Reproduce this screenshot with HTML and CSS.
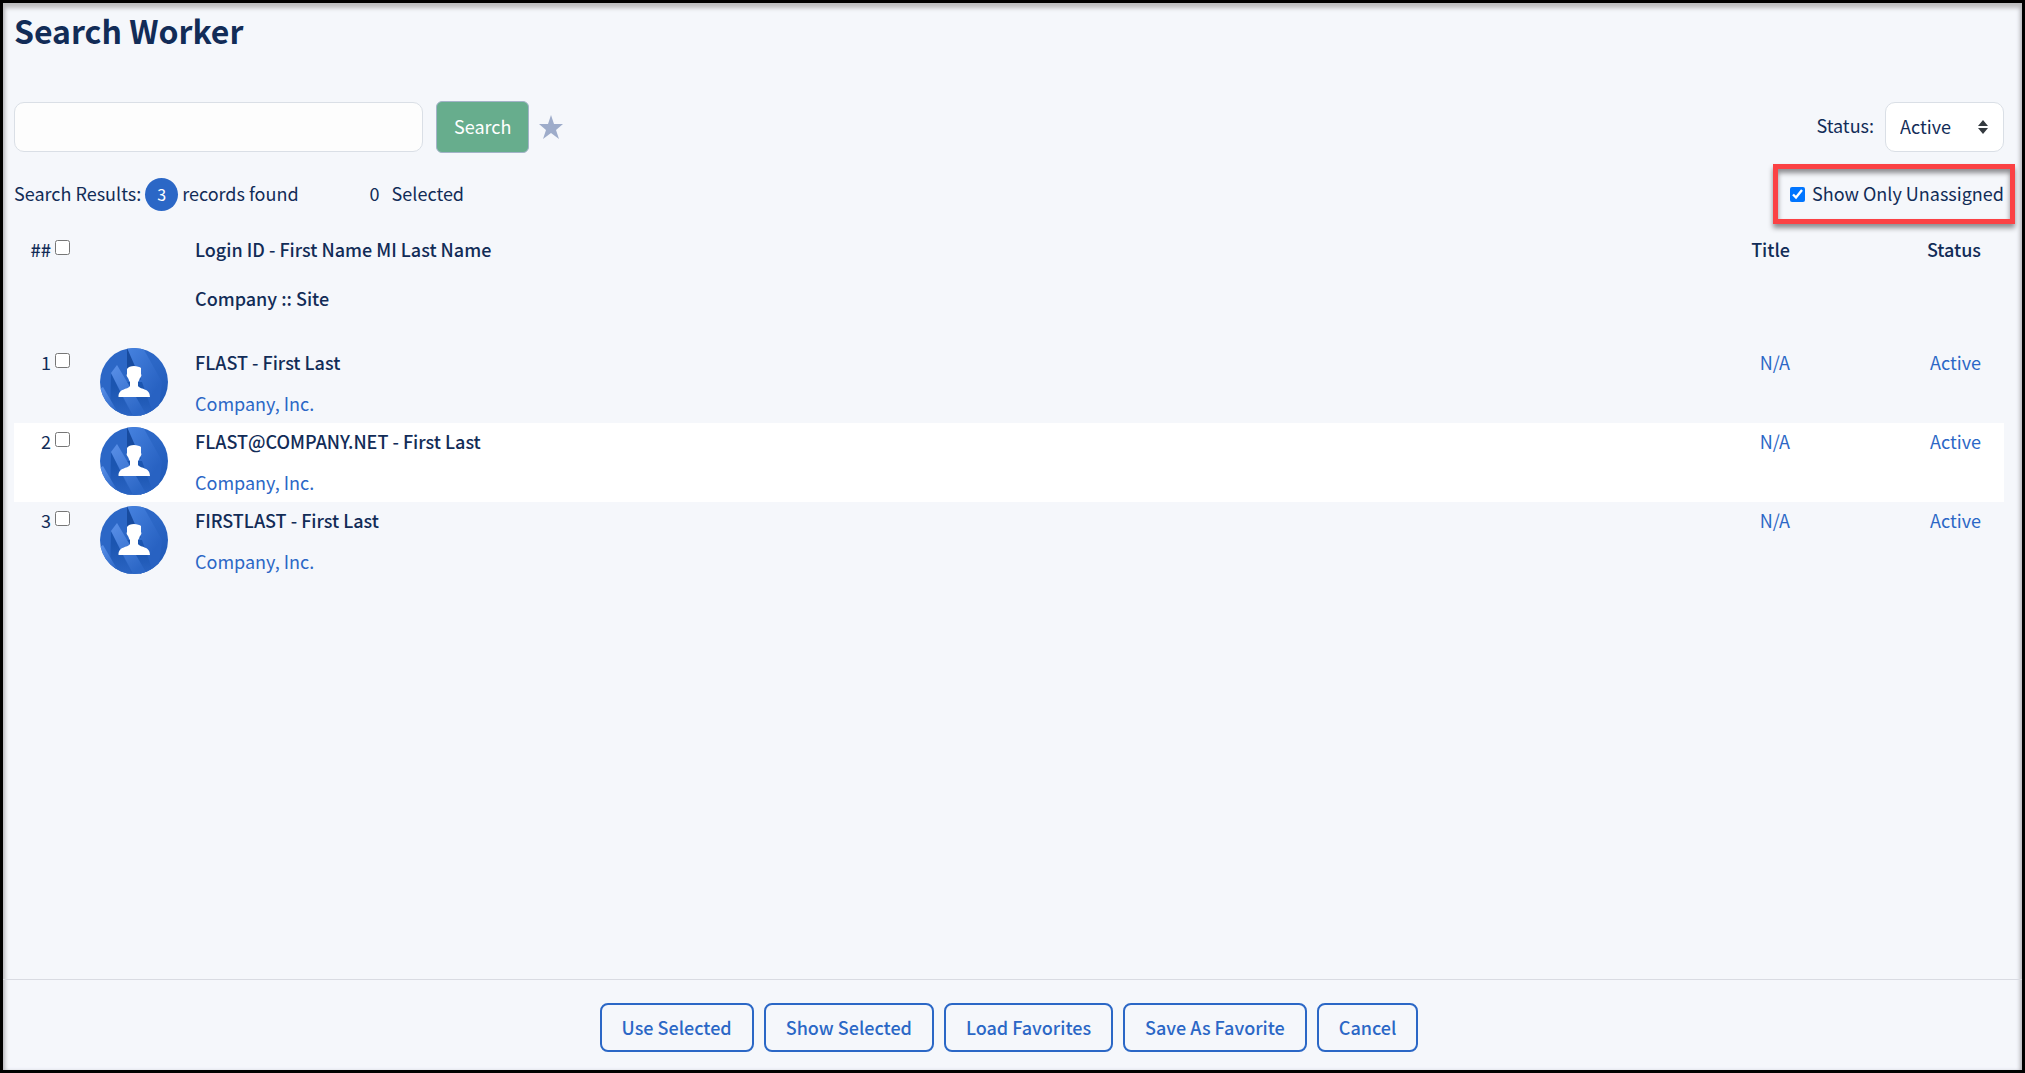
FILE: index.html
```html
<!DOCTYPE html>
<html lang="en">
<head>
<meta charset="utf-8">
<title>Search Worker</title>
<link rel="stylesheet" href="styles.css">
</head>
<body>
<svg class="defs" aria-hidden="true">
  <defs>
    <linearGradient id="base" x1="0" y1="0" x2="1" y2="1">
      <stop offset="0.5" stop-color="#2c67c6"/>
      <stop offset="0.9" stop-color="#205ab8"/>
    </linearGradient>
    <linearGradient id="beam" x1="0" y1="0" x2="0.7" y2="1">
      <stop offset="0" stop-color="#4682df"/>
      <stop offset="0.8" stop-color="#2862c2"/>
    </linearGradient>
    <linearGradient id="shard" x1="0" y1="0" x2="0.6" y2="1">
      <stop offset="0" stop-color="#5a90e8"/>
      <stop offset="1" stop-color="#2c67c6"/>
    </linearGradient>
    <linearGradient id="shade" x1="0" y1="0" x2="0" y2="1">
      <stop offset="0.3" stop-color="#1b55b0"/>
      <stop offset="1" stop-color="#2a64c3"/>
    </linearGradient>
    <clipPath id="disc"><circle cx="34" cy="34" r="34"/></clipPath>
    <symbol id="avatar" viewBox="0 0 68 68">
      <g clip-path="url(#disc)">
        <path fill="url(#base)" d="M0 0h68v68H0z"/>
        <path fill="url(#beam)" d="M27 0h16l19 34-4 34H50z"/>
        <path fill="#174b9f" d="M27 0l14 32-14-8z"/>
        <path fill="url(#shade)" d="M11 25l21 43H10z"/>
        <path fill="url(#shade)" d="M24 34h18l12 34H40z"/>
        <path fill="url(#shard)" d="M11 25l6-8 19 32 11 19H33z"/>
        <path fill="url(#shard)" d="M0 41l3-2 17 29H0z"/>
      </g>
      <path fill="#fff" d="M27 21c1-2 4-3 7-3s6 1 7 2v6c1 1 0 3-1 4-1 2-1 3-2 4v4c3 4 12 2 12 11H18.500c0-9 9-7 11.500-11v-4c-1-1-1-2-2-4-1-1-2-3-1-4z"/>
    </symbol>
  </defs>
</svg>
<div class="page">
  <main class="content">
    <h1 class="title">Search Worker</h1>
    <form class="toolbar">
      <input class="search-box" type="text" aria-label="Search workers">
      <button class="search-button" type="button">Search</button>
      <button class="star" type="button" aria-label="Favorite">
        <svg viewBox="0 0 24 24" width="24" height="24"><path fill="#9eacca" d="M12 0l3 9h9l-7 6 3 9-8-6-8 6 3-9-7-6h9z"/></svg>
      </button>
      <label class="status-label" for="status">Status:</label>
      <div class="select-wrap">
        <select class="status-select" id="status"><option>Active</option><option>Inactive</option></select>
        <svg class="arrows" viewBox="0 0 10 14" width="10" height="14"><path fill="#343a40" d="M5 0l5 6H0zM5 14l5-6H0z"/></svg>
      </div>
    </form>
    <div class="summary">
      <span class="text">Search Results:</span>
      <span class="badge">3</span>
      <span class="text">records found</span>
      <span class="text selected-count">0</span>
      <span class="text">Selected</span>
      <div class="highlight">
        <input class="check" type="checkbox" id="unassigned" checked>
        <label class="text" for="unassigned">Show Only Unassigned</label>
      </div>
    </div>
    <table class="workers">
      <thead>
        <tr>
          <th class="num"><div class="pick"><span>##</span><input class="check" type="checkbox" aria-label="Select all"></div></th>
          <th class="photo"></th>
          <th class="name"><div>Login ID - First Name MI Last Name</div><div class="site">Company :: Site</div></th>
          <th class="job">Title</th>
          <th class="state">Status</th>
        </tr>
      </thead>
      <tbody>
        <tr>
          <td class="num"><div class="pick"><span>1</span><input class="check" type="checkbox" aria-label="Select FLAST"></div></td>
          <td class="photo"><svg class="avatar"><use href="#avatar"/></svg></td>
          <td class="name"><div class="login">FLAST - First Last</div><div class="company">Company, Inc.</div></td>
          <td class="job">N/A</td>
          <td class="state">Active</td>
        </tr>
        <tr>
          <td class="num"><div class="pick"><span>2</span><input class="check" type="checkbox" aria-label="Select FLAST@COMPANY.NET"></div></td>
          <td class="photo"><svg class="avatar"><use href="#avatar"/></svg></td>
          <td class="name"><div class="login">FLAST@COMPANY.NET - First Last</div><div class="company">Company, Inc.</div></td>
          <td class="job">N/A</td>
          <td class="state">Active</td>
        </tr>
        <tr>
          <td class="num"><div class="pick"><span>3</span><input class="check" type="checkbox" aria-label="Select FIRSTLAST"></div></td>
          <td class="photo"><svg class="avatar"><use href="#avatar"/></svg></td>
          <td class="name"><div class="login">FIRSTLAST - First Last</div><div class="company">Company, Inc.</div></td>
          <td class="job">N/A</td>
          <td class="state">Active</td>
        </tr>
      </tbody>
    </table>
  </main>
  <footer class="actions">
    <button class="action" type="button">Use Selected</button>
    <button class="action" type="button">Show Selected</button>
    <button class="action" type="button">Load Favorites</button>
    <button class="action" type="button">Save As Favorite</button>
    <button class="action" type="button">Cancel</button>
  </footer>
</div>
</body>
</html>
```
FILE: styles.css
```css
* {
  box-sizing: border-box;
}

body {
  margin: 0;
  color: #122c57;
  font: 18px/24px "Noto Sans CJK SC", "Noto Sans", sans-serif;
}

button,
input,
select {
  margin: 0;
  color: inherit;
  font: inherit;
}

.defs {
  position: absolute;
  width: 0;
  height: 0;
}

.page {
  display: flex;
  flex-direction: column;
  min-height: 100vh;
  border: 3px solid #000;
  background: #f5f7fb;
  box-shadow: inset 0 5px 4px #bcbcbe, inset 4px 0 5px -3px #a4a4ac, inset -4px 0 5px -3px #a4a4ac;
}

.content {
  flex: 1;
  padding: 7px 18px 0 11px;
}

.title {
  margin: 0;
  font-size: 32px;
  line-height: 40px;
  font-weight: 700;
}

.toolbar {
  display: flex;
  align-items: center;
  height: 52px;
  margin-top: 51px;
}

.search-box {
  width: 409px;
  height: 50px;
  padding: 0 14px;
  border: 1px solid #dadfe6;
  border-radius: 10px;
  background: #fdfdfd;
}

.search-button {
  height: 52px;
  margin-left: 13px;
  padding: 0 17px 2px;
  border: 1px solid #a3b3c8;
  border-radius: 6px;
  background: #67ad8d;
  color: #fff;
}

.star {
  display: flex;
  margin-left: 10px;
  padding: 0;
  border: 0;
  background: none;
}

.status-label {
  margin-left: auto;
  padding-bottom: 4px;
}

.select-wrap {
  display: grid;
  align-items: center;
  width: 119px;
  margin-left: 11px;
}

.status-select {
  grid-area: 1 / 1;
  height: 50px;
  padding: 0 14px 2px;
  border: 1px solid #dadfe6;
  border-radius: 10px;
  background: #fff;
  appearance: none;
}

.arrows {
  grid-area: 1 / 1;
  justify-self: end;
  margin-right: 16px;
  pointer-events: none;
}

.summary {
  display: flex;
  align-items: center;
  height: 60px;
  margin-top: 11px;
  margin-right: -11px;
}

.text {
  padding-bottom: 2px;
}

.badge {
  width: 33px;
  height: 33px;
  margin: 0 4px;
  border-radius: 50%;
  background: #2b67c6;
  color: #fff;
  font-size: 16px;
  line-height: 33px;
  text-align: center;
}

.selected-count {
  margin: 0 12px 0 71px;
}

.highlight {
  display: flex;
  align-items: center;
  gap: 7px;
  height: 60px;
  margin-left: auto;
  padding: 0 6px 0 12px;
  border: 5px solid #fb4144;
  box-shadow: 0 4px 5px #8c8c90, inset 0 4px 5px #8c8c90;
}

.check {
  flex: none;
  width: 15px;
  height: 15px;
}

.workers {
  width: 100%;
  border-collapse: collapse;
}

.workers th,
.workers td {
  padding: 6px 0 0;
  vertical-align: top;
  text-align: left;
  font-weight: 400;
}

.workers thead tr {
  height: 120px;
}

.workers thead th {
  padding-top: 13px;
  font-weight: 500;
}

.workers tbody tr {
  height: 79px;
}

.workers tbody tr:nth-child(even) {
  background: #fff;
}

.workers .num {
  width: 56px;
}

.pick {
  display: flex;
  justify-content: flex-end;
  gap: 4px;
}

.pick .check {
  margin-top: 3px;
}

.workers .photo {
  width: 125px;
  padding: 4px 0 0 30px;
}

.avatar {
  display: block;
  width: 68px;
  height: 68px;
}

.site {
  margin-top: 25px;
}

.login {
  font-weight: 500;
}

.company {
  margin-top: 17px;
}

.company,
tbody .job,
tbody .state {
  color: #2b67c6;
}

.workers .job {
  width: 200px;
  text-align: right;
}

.workers .state {
  width: 214px;
  padding-right: 23px;
  text-align: right;
}

.actions {
  display: flex;
  justify-content: center;
  gap: 10px;
  padding: 23px 18px 18px 11px;
  border-top: 1px solid #d9dbe2;
}

.action {
  height: 49px;
  padding: 0 20px 2px;
  border: 2px solid #2b67c6;
  border-radius: 8px;
  background: transparent;
  color: #2b67c6;
  font-weight: 500;
}
```
